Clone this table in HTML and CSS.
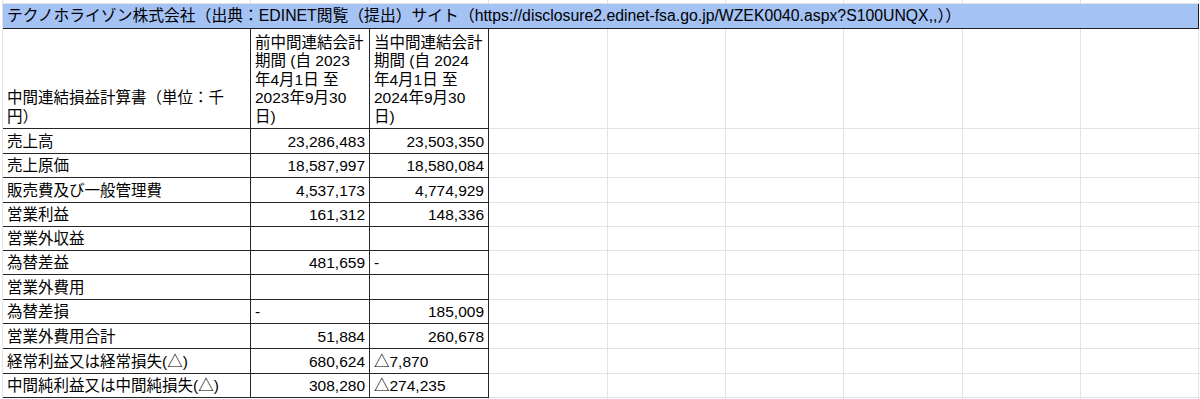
FILE: index.html
```html
<!DOCTYPE html>
<html lang="ja">
<head>
<meta charset="utf-8">
<title>中間連結損益計算書</title>
<link rel="stylesheet" href="styles.css">
</head>
<body>
<div class="sheet">
  <!-- partial row above -->
  <div class="c"></div><div class="c"></div><div class="c"></div><div class="c"></div><div class="c"></div><div class="c"></div><div class="c"></div><div class="c"></div><div class="c"></div><div class="c"></div>

  <!-- title row -->
  <div class="c title">テクノホライゾン株式会社（出典：EDINET閲覧（提出）サイト（https://disclosure2.edinet-fsa.go.jp/WZEK0040.aspx?S100UNQX,,））</div>
  <div class="c"></div>

  <!-- header row -->
  <div class="c t">中間連結損益計算書（単位：千<br>円）</div>
  <div class="c t">前中間連結会計<br>期間 (自 2023<br>年4月1日 至<br>2023年9月30<br>日)</div>
  <div class="c t">当中間連結会計<br>期間 (自 2024<br>年4月1日 至<br>2024年9月30<br>日)</div>
  <div class="c"></div><div class="c"></div><div class="c"></div><div class="c"></div><div class="c"></div><div class="c"></div><div class="c"></div>

  <div class="c t">売上高</div><div class="c t num">23,286,483</div><div class="c t num">23,503,350</div>
  <div class="c"></div><div class="c"></div><div class="c"></div><div class="c"></div><div class="c"></div><div class="c"></div><div class="c"></div>

  <div class="c t">売上原価</div><div class="c t num">18,587,997</div><div class="c t num">18,580,084</div>
  <div class="c"></div><div class="c"></div><div class="c"></div><div class="c"></div><div class="c"></div><div class="c"></div><div class="c"></div>

  <div class="c t">販売費及び一般管理費</div><div class="c t num">4,537,173</div><div class="c t num">4,774,929</div>
  <div class="c"></div><div class="c"></div><div class="c"></div><div class="c"></div><div class="c"></div><div class="c"></div><div class="c"></div>

  <div class="c t">営業利益</div><div class="c t num">161,312</div><div class="c t num">148,336</div>
  <div class="c"></div><div class="c"></div><div class="c"></div><div class="c"></div><div class="c"></div><div class="c"></div><div class="c"></div>

  <div class="c t">営業外収益</div><div class="c t"></div><div class="c t"></div>
  <div class="c"></div><div class="c"></div><div class="c"></div><div class="c"></div><div class="c"></div><div class="c"></div><div class="c"></div>

  <div class="c t">為替差益</div><div class="c t num">481,659</div><div class="c t">-</div>
  <div class="c"></div><div class="c"></div><div class="c"></div><div class="c"></div><div class="c"></div><div class="c"></div><div class="c"></div>

  <div class="c t">営業外費用</div><div class="c t"></div><div class="c t"></div>
  <div class="c"></div><div class="c"></div><div class="c"></div><div class="c"></div><div class="c"></div><div class="c"></div><div class="c"></div>

  <div class="c t">為替差損</div><div class="c t">-</div><div class="c t num">185,009</div>
  <div class="c"></div><div class="c"></div><div class="c"></div><div class="c"></div><div class="c"></div><div class="c"></div><div class="c"></div>

  <div class="c t">営業外費用合計</div><div class="c t num">51,884</div><div class="c t num">260,678</div>
  <div class="c"></div><div class="c"></div><div class="c"></div><div class="c"></div><div class="c"></div><div class="c"></div><div class="c"></div>

  <div class="c t">経常利益又は経常損失(△)</div><div class="c t num">680,624</div><div class="c t">△7,870</div>
  <div class="c"></div><div class="c"></div><div class="c"></div><div class="c"></div><div class="c"></div><div class="c"></div><div class="c"></div>

  <div class="c t">中間純利益又は中間純損失(△)</div><div class="c t num">308,280</div><div class="c t">△274,235</div>
  <div class="c"></div><div class="c"></div><div class="c"></div><div class="c"></div><div class="c"></div><div class="c"></div><div class="c"></div>

  <!-- row below -->
  <div class="c"></div><div class="c"></div><div class="c"></div><div class="c"></div><div class="c"></div><div class="c"></div><div class="c"></div><div class="c"></div><div class="c"></div><div class="c"></div>
</div>
</body>
</html>
```

FILE: styles.css
```css
html, body {
  margin: 0;
  padding: 0;
  background: #ffffff;
}

body {
  font-family: "Liberation Sans", Arial, "Noto Sans CJK JP", sans-serif;
  font-size: 15.5px;
  line-height: 18.5px;
  color: #000000;
  overflow: hidden;
}

.sheet {
  display: grid;
  margin-left: 2px;
  border-left: 1px solid #e2e3e3;
  grid-template-columns: 248px 119px 119px 119px 118px 118px 119px 118px 118px 1fr;
  grid-template-rows: 4px 25px 100px 25px 24px 25px 24px 24px 24px 25px 24px 25px 25px 24px 20px;
}

.c {
  box-sizing: border-box;
  border-right: 1px solid #e2e3e3;
  border-bottom: 1px solid #e2e3e3;
  display: flex;
  align-items: flex-end;
  padding: 0 4px 2px 4px;
  white-space: nowrap;
  overflow: hidden;
  min-width: 0;
}

.title {
  grid-column: 1 / span 9;
  background: #a4c2f4;
  border-right-color: #1e1e1e;
  border-bottom-color: #1e1e1e;
  padding-bottom: 3px;
  font-size: 15.8px;
  overflow: visible;
}

.t {
  border-right-color: #262626;
  border-bottom-color: #262626;
}

.num {
  justify-content: flex-end;
}
```
